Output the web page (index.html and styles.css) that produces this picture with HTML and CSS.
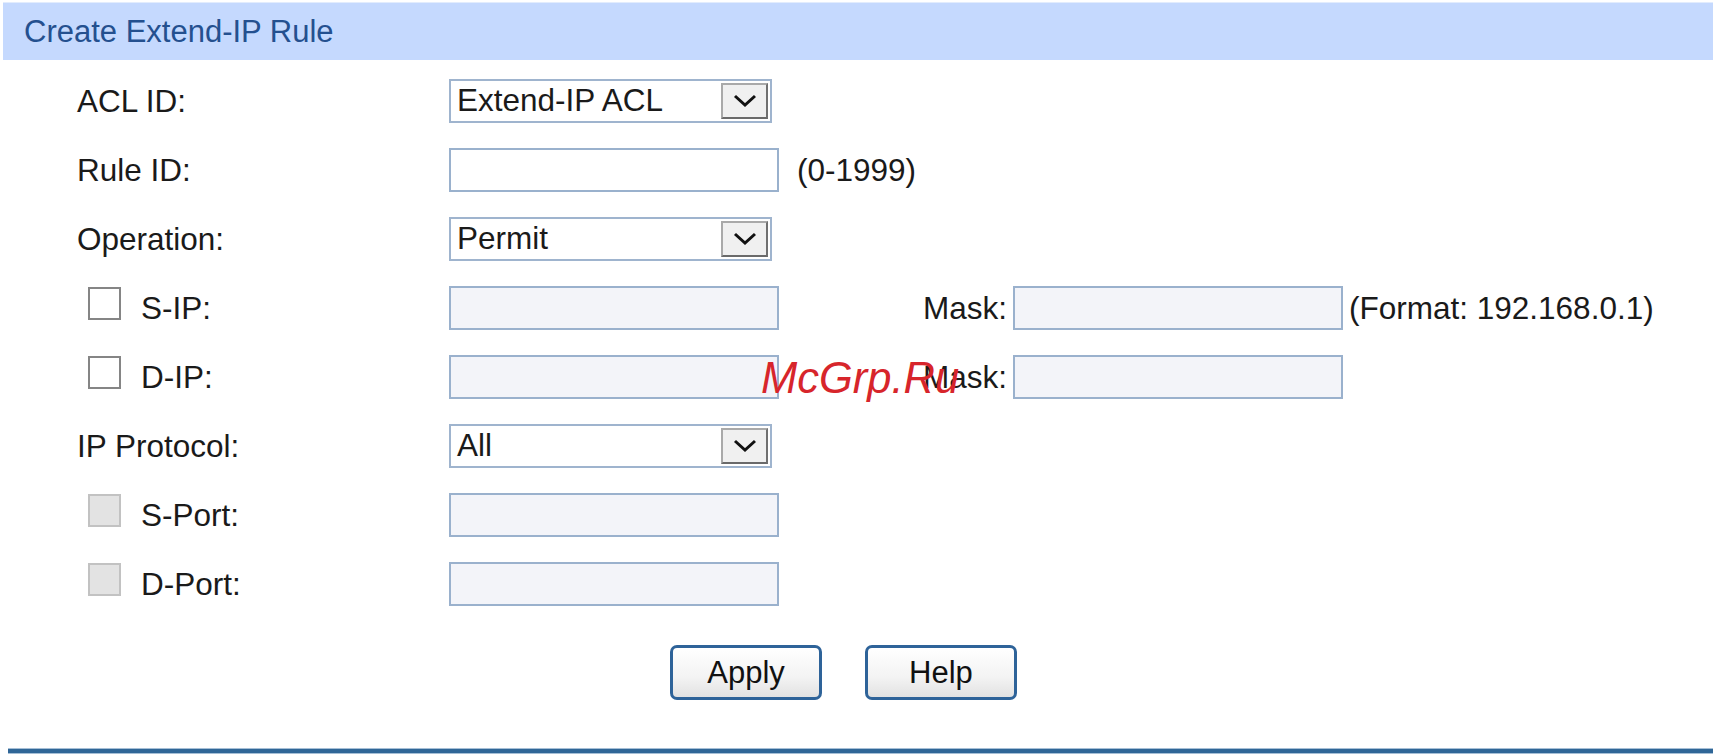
FILE: index.html
```html
<!DOCTYPE html>
<html lang="en">
<head>
    <meta charset="UTF-8">
    <title>Create Extend-IP Rule</title>

    <link rel="stylesheet" href="styles.css">
</head>
<body>

<div class="panel-title">Create Extend-IP Rule</div>

<form class="rule-form" action="/">
    <div class="form-row">
        <label class="form-label">ACL ID:</label>
        <div class="select">
            <span class="select-value">Extend-IP ACL</span>
            <span class="select-btn">
                <svg width="24" height="14" viewBox="0 0 24 14"><path d="M2 2 L12 11 L22 2" fill="none" stroke="#111" stroke-width="3"/></svg>
            </span>
        </div>
    </div>

    <div class="form-row">
        <label class="form-label" for="rule-id">Rule ID:</label>
        <input class="form-input" type="text" id="rule-id">
        <span class="hint hint-range">(0-1999)</span>
    </div>

    <div class="form-row">
        <label class="form-label">Operation:</label>
        <div class="select">
            <span class="select-value">Permit</span>
            <span class="select-btn">
                <svg width="24" height="14" viewBox="0 0 24 14"><path d="M2 2 L12 11 L22 2" fill="none" stroke="#111" stroke-width="3"/></svg>
            </span>
        </div>
    </div>

    <div class="form-row">
        <label class="form-label check-label"><input class="check-box" type="checkbox">S-IP:</label>
        <input class="form-input off" type="text">
        <span class="mask-label">Mask:</span>
        <input class="form-input off" type="text">
        <span class="hint">(Format: 192.168.0.1)</span>
    </div>

    <div class="form-row">
        <label class="form-label check-label"><input class="check-box" type="checkbox">D-IP:</label>
        <input class="form-input off" type="text">
        <span class="mask-label">Mask:</span>
        <input class="form-input off" type="text">
    </div>

    <div class="form-row">
        <label class="form-label">IP Protocol:</label>
        <div class="select">
            <span class="select-value">All</span>
            <span class="select-btn">
                <svg width="24" height="14" viewBox="0 0 24 14"><path d="M2 2 L12 11 L22 2" fill="none" stroke="#111" stroke-width="3"/></svg>
            </span>
        </div>
    </div>

    <div class="form-row">
        <label class="form-label check-label"><input class="check-box" type="checkbox" disabled>S-Port:</label>
        <input class="form-input off" type="text">
    </div>

    <div class="form-row">
        <label class="form-label check-label"><input class="check-box" type="checkbox" disabled>D-Port:</label>
        <input class="form-input off" type="text">
    </div>

    <div class="form-buttons">
        <button class="btn" type="submit">Apply</button>
        <button class="btn" type="button">Help</button>
    </div>
</form>

<div class="bottom-line"></div>

<div class="watermark">McGrp.Ru</div>

</body>
</html>
```

FILE: styles.css
```css
body {
    margin: 0;
    font: 31.5px "Liberation Sans", Arial, sans-serif;
    color: #1a1a1a;
    background: #fff;
    position: relative;
    height: 756px;
    overflow: hidden;
}

.panel-title {
    margin: 2px 0 0 3px;
    height: 58px;
    line-height: 58px;
    padding-left: 21px;
    background: #c5d9fe;
    border-top: 1px solid #e2ecfd;
    box-sizing: border-box;
    color: #24508f;
    font-size: 31px;
}

.rule-form {
    padding: 19px 0 0 77px;
}

.form-row {
    display: flex;
    align-items: center;
    height: 44px;
    margin-bottom: 25px;
}

.form-label {
    width: 372px;
    flex-shrink: 0;
    display: flex;
    align-items: center;
}

.check-label {
    padding-left: 11px;
    box-sizing: border-box;
}

.check-box {
    appearance: none;
    width: 33px;
    height: 33px;
    margin: -10px 20px 0 0;
    border: 2px solid #858585;
    background: #fff;
    box-sizing: border-box;
}

.check-box:disabled {
    border-color: #c2c2c2;
    background: #e3e3e3;
}

.form-input {
    width: 330px;
    height: 44px;
    box-sizing: border-box;
    border: 2px solid #9ab1cd;
    background: #fff;
    outline: none;
    font: inherit;
    padding: 0 6px;
    margin: 0;
}

.form-input.off {
    background: #f3f4f9;
}

.select {
    width: 323px;
    height: 44px;
    box-sizing: border-box;
    border: 2px solid #9fb4ce;
    background: #fff;
    display: flex;
    align-items: center;
    justify-content: space-between;
    padding: 2px;
}

.select-value {
    padding-left: 4px;
    line-height: 1;
}

.select-btn {
    width: 47px;
    height: 36px;
    box-sizing: border-box;
    background: #f0f0f0;
    border: 2px solid;
    border-color: #a9a9a9 #707070 #6a6a6a #a9a9a9;
    display: flex;
    align-items: center;
    justify-content: center;
}

.hint {
    margin-left: 6px;
}

.hint-range {
    margin-left: 18px;
}

.mask-label {
    margin: 0 6px 0 144px;
}

.form-buttons {
    display: flex;
    gap: 43px;
    padding-left: 593px;
    margin-top: 39px;
}

.btn {
    width: 152px;
    height: 55px;
    border: 3px solid #2e6399;
    border-radius: 7px;
    background: linear-gradient(#ffffff, #f3f3f3 60%, #e2e2e2);
    font: 31px "Liberation Sans", Arial, sans-serif;
    color: #111;
    cursor: pointer;
    padding: 0;
}

.bottom-line {
    margin: 48px 0 0 8px;
    height: 4px;
    background: #2f6697;
    border-top: 1px solid #a6bfd6;
    border-bottom: 1px solid #a6bfd6;
}

.watermark {
    position: absolute;
    left: 761px;
    top: 357px;
    font: italic 43.5px "Liberation Sans", Arial, sans-serif;
    color: #d7252b;
    line-height: 1;
}
```
